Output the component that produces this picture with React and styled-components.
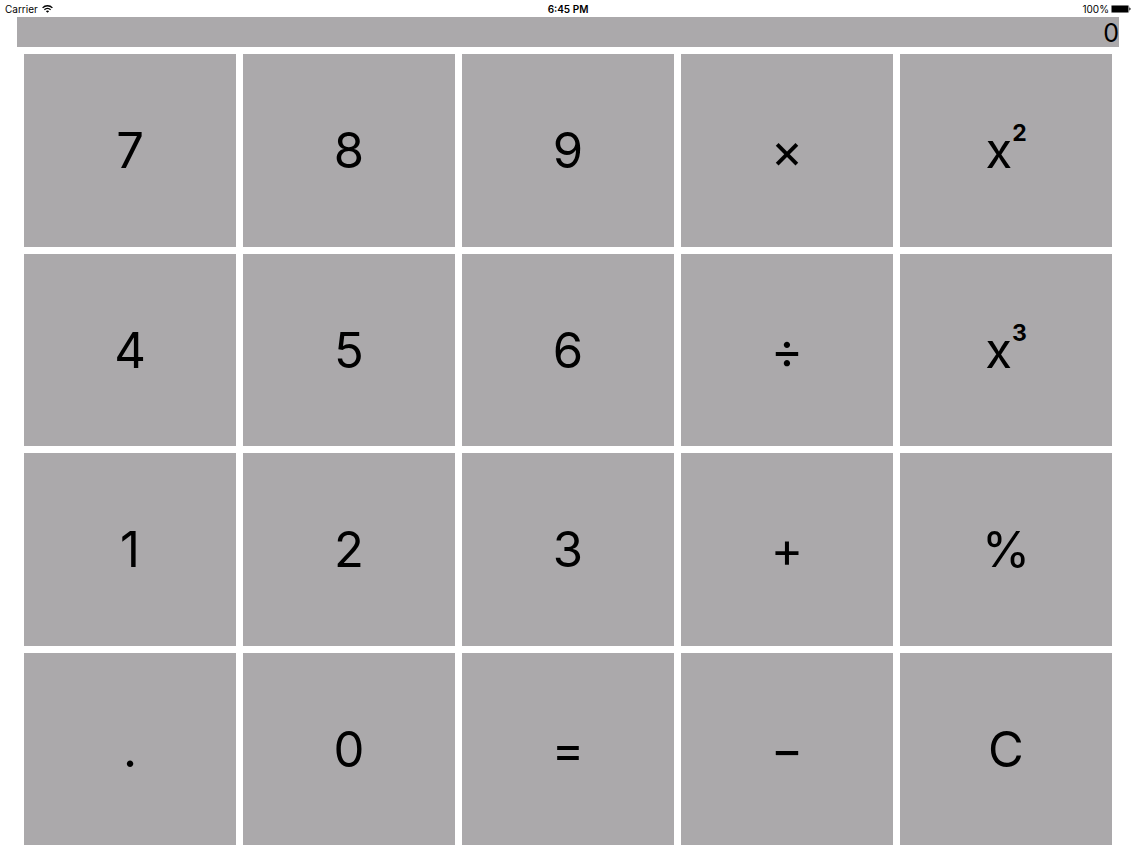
import React from "react";
import styled, { createGlobalStyle } from "styled-components";

const GlobalStyle = createGlobalStyle`
  *, *::before, *::after { box-sizing: border-box; }
  body { margin: 0; background: #fff; color: #000; font-family: Inter, Roboto, sans-serif; }
`;

const Screen = styled.div`
  display: flex;
  flex-direction: column;
  height: 100vh;
`;

const StatusBar = styled.header`
  display: grid;
  grid-template-columns: 1fr auto 1fr;
  align-items: center;
  height: 17px;
  padding: 1px 5px 0;
  font-size: 10px;
  line-height: 16px;
`;

const StatusGroup = styled.div`
  display: flex;
  align-items: center;
  justify-content: ${(p) => (p.$end ? "flex-end" : "flex-start")};
  gap: ${(p) => (p.$end ? "2px" : "4px")};
`;

const Clock = styled.time`
  font-weight: 600;
`;

const Calculator = styled.main`
  display: flex;
  flex: 1;
  flex-direction: column;
  min-height: 0;
  padding: 0 17px;
`;

const Display = styled.output`
  height: 30px;
  background: #aba9ab;
  font-size: 25px;
  line-height: 32px;
  text-align: right;
`;

const Keypad = styled.div`
  display: grid;
  flex: 1;
  grid-template-columns: repeat(5, 1fr);
  grid-template-rows: repeat(4, 1fr);
  gap: 7px;
  min-height: 0;
  padding: 7px;
`;

const Key = styled.button`
  border: 0;
  padding: 2px 0 0;
  background: #aba9ab;
  color: #000;
  font: 400 49px/60px Inter, Roboto, sans-serif;
`;

const Power = styled.sup`
  font-size: 23px;
  font-weight: 700;
  line-height: 0;
  vertical-align: 27px;
`;

const keys = [
  "7", "8", "9", "×", "x2",
  "4", "5", "6", "÷", "x3",
  "1", "2", "3", "+", "%",
  ".", "0", "=", "−", "C",
];

function WifiIcon() {
  return (
    <svg width="11" height="8" viewBox="0 0 11 8" aria-hidden="true" fill="none" stroke="#000" strokeWidth="1.3">
      <path d="M.6 2.9C3.3 0 7.7 0 10.4 2.9" />
      <path d="M2.4 4.8C4.1 3 6.9 3 8.6 4.8" />
      <path d="M5.5 7.8 3.9 6.2C4.7 5.3 6.3 5.3 7.1 6.2Z" fill="#000" stroke="none" />
    </svg>
  );
}

function BatteryIcon() {
  return (
    <svg width="20" height="8" viewBox="0 0 20 8" aria-hidden="true">
      <rect x=".25" y=".25" width="17.5" height="7.5" rx="1.5" fill="none" stroke="#000" strokeWidth=".5" />
      <rect x=".8" y=".8" width="16.4" height="6.4" rx=".8" />
      <path d="M18.4 2.6C20 2.9 20 5.1 18.4 5.4Z" />
    </svg>
  );
}

export default function App() {
  return (
    <Screen>
      <GlobalStyle />
      <StatusBar>
        <StatusGroup>Carrier <WifiIcon /></StatusGroup>
        <Clock>6:45 PM</Clock>
        <StatusGroup $end>100% <BatteryIcon /></StatusGroup>
      </StatusBar>
      <Calculator>
        <Display aria-label="Result">0</Display>
        <Keypad>
          {keys.map((k) => (
            <Key key={k} type="button">
              {k.length > 1 ? <>{k[0]}<Power>{k[1]}</Power></> : k}
            </Key>
          ))}
        </Keypad>
      </Calculator>
    </Screen>
  );
}
